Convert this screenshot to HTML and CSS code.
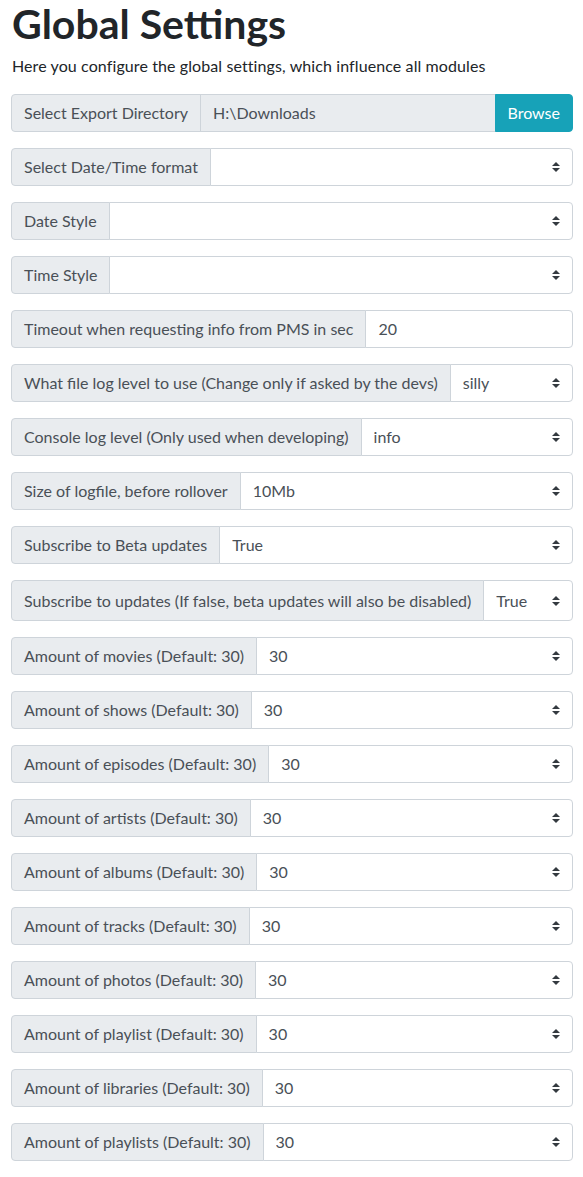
FILE: index.html
```
<!DOCTYPE html>
<html lang="en">
<head>
<meta charset="utf-8">
<title>Global Settings</title>
<link rel="stylesheet" href="styles.css">
</head>
<body>
<div class="container">
  <h1 class="title">Global Settings</h1>
  <p class="lead">Here you configure the global settings, which influence all modules</p>

  <div class="group">
    <span class="label">Select Export Directory</span>
    <input class="control readonly" type="text" value="H:\Downloads" readonly>
    <button class="btn-browse" type="button">Browse</button>
  </div>

  <div class="group">
    <span class="label">Select Date/Time format</span>
    <select class="control select"><option></option></select>
  </div>

  <div class="group">
    <span class="label">Date Style</span>
    <select class="control select"><option></option></select>
  </div>

  <div class="group">
    <span class="label">Time Style</span>
    <select class="control select"><option></option></select>
  </div>

  <div class="group">
    <span class="label">Timeout when requesting info from PMS in sec</span>
    <input class="control" type="text" value="20">
  </div>

  <div class="group">
    <span class="label">What file log level to use (Change only if asked by the devs)</span>
    <select class="control select"><option>silly</option></select>
  </div>

  <div class="group">
    <span class="label">Console log level (Only used when developing)</span>
    <select class="control select"><option>info</option></select>
  </div>

  <div class="group">
    <span class="label">Size of logfile, before rollover</span>
    <select class="control select"><option>10Mb</option></select>
  </div>

  <div class="group">
    <span class="label">Subscribe to Beta updates</span>
    <select class="control select"><option>True</option></select>
  </div>

  <div class="group tall">
    <span class="label">Subscribe to updates (If false, beta updates will also be disabled)</span>
    <select class="control select"><option>True</option></select>
  </div>

  <div class="group">
    <span class="label">Amount of movies (Default: 30)</span>
    <select class="control select"><option>30</option></select>
  </div>

  <div class="group">
    <span class="label">Amount of shows (Default: 30)</span>
    <select class="control select"><option>30</option></select>
  </div>

  <div class="group">
    <span class="label">Amount of episodes (Default: 30)</span>
    <select class="control select"><option>30</option></select>
  </div>

  <div class="group">
    <span class="label">Amount of artists (Default: 30)</span>
    <select class="control select"><option>30</option></select>
  </div>

  <div class="group">
    <span class="label">Amount of albums (Default: 30)</span>
    <select class="control select"><option>30</option></select>
  </div>

  <div class="group">
    <span class="label">Amount of tracks (Default: 30)</span>
    <select class="control select"><option>30</option></select>
  </div>

  <div class="group">
    <span class="label">Amount of photos (Default: 30)</span>
    <select class="control select"><option>30</option></select>
  </div>

  <div class="group">
    <span class="label">Amount of playlist (Default: 30)</span>
    <select class="control select"><option>30</option></select>
  </div>

  <div class="group">
    <span class="label">Amount of libraries (Default: 30)</span>
    <select class="control select"><option>30</option></select>
  </div>

  <div class="group">
    <span class="label">Amount of playlists (Default: 30)</span>
    <select class="control select"><option>30</option></select>
  </div>
</div>
</body>
</html>
```

FILE: styles.css
```
* {
  box-sizing: border-box;
}

html, body {
  margin: 0;
  padding: 0;
  background: #fff;
}

body {
  font-family: Lato, "Liberation Sans", sans-serif;
  font-size: 16px;
  line-height: 1.5;
  color: #212529;
}

.container {
  padding: 0 10px 16px 11px;
}

.title {
  margin: 0 0 6px 1px;
  font-size: 41px;
  line-height: 48px;
  font-weight: 700;
  color: #212529;
}

.lead {
  margin: 0 0 16px 1px;
  font-size: 16px;
  line-height: 24px;
  letter-spacing: 0.1px;
}

.group {
  display: flex;
  align-items: stretch;
  height: 38px;
  margin-bottom: 16px;
}

.group.tall {
  height: 41px;
}

.label {
  display: flex;
  align-items: center;
  flex: 0 0 auto;
  padding: 0 12px;
  background: #e9ecef;
  border: 1px solid #ced4da;
  border-radius: 4px 0 0 4px;
  color: #495057;
  font-size: 16px;
  white-space: nowrap;
}

.control {
  flex: 1 1 auto;
  min-width: 0;
  margin: 0 0 0 -1px;
  padding: 0 12px;
  border: 1px solid #ced4da;
  border-radius: 0 4px 4px 0;
  background: #fff;
  color: #495057;
  font-family: inherit;
  font-size: 16px;
  line-height: 1.5;
  outline: none;
}

.control.readonly {
  background: #e9ecef;
  border-radius: 0;
}

.select {
  -webkit-appearance: none;
  appearance: none;
  padding-right: 28px;
  background: #fff url("data:image/svg+xml,%3csvg xmlns='http://www.w3.org/2000/svg' width='4' height='5' viewBox='0 0 4 5'%3e%3cpath fill='%23343a40' d='M2 0L0 2h4zm0 5L0 3h4z'/%3e%3c/svg%3e") no-repeat right 12px center;
  background-size: 8px 10px;
}

.btn-browse {
  flex: 0 0 auto;
  margin-left: -1px;
  padding: 0 12px;
  border: 1px solid #17a2b8;
  border-radius: 0 4px 4px 0;
  background: #17a2b8;
  color: #fff;
  font-family: inherit;
  font-size: 16px;
  line-height: 1.5;
}
```
